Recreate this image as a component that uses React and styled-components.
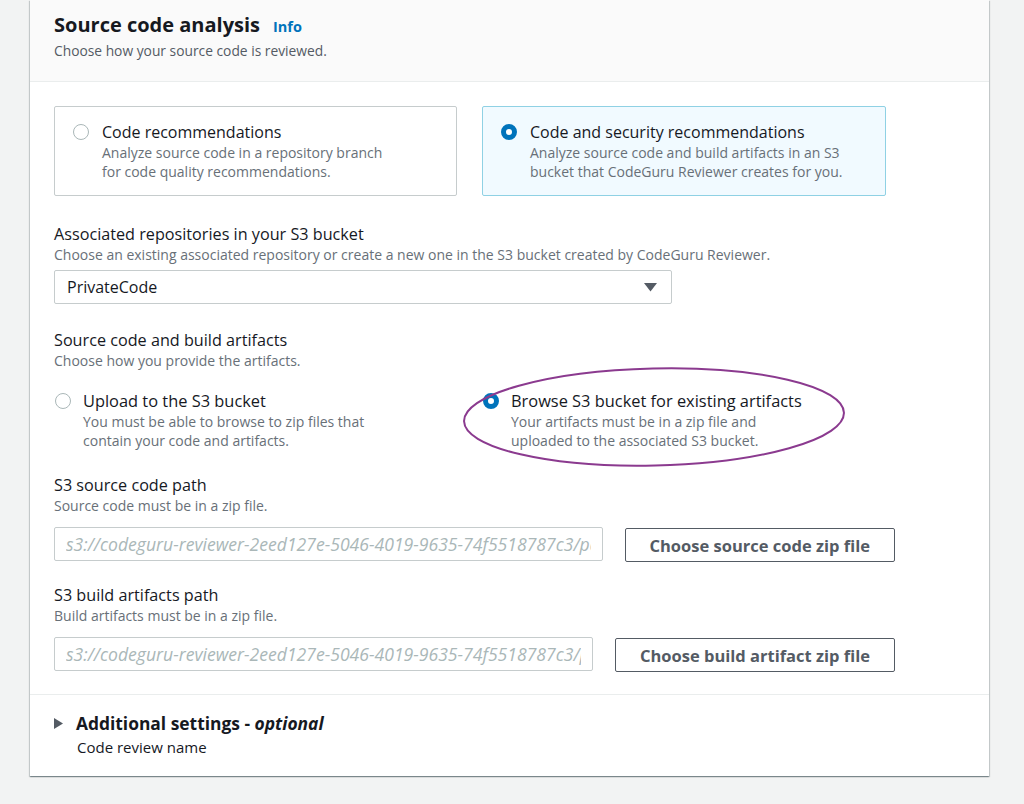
import React from 'react';
import styled, { createGlobalStyle } from 'styled-components';

const GlobalStyle = createGlobalStyle`
  body {
    margin: 0;
    background: #f2f3f3;
    font-family: "Open Sans", "Noto Sans", sans-serif;
    color: #16191f;
  }
`;

const Page = styled.div`
  padding: 0 35px 28px 30px;
`;

const Card = styled.section`
  width: 959px;
  background: #ffffff;
  box-shadow: 0 1px 1px 0 rgba(0, 28, 36, 0.3), 1px 1px 1px 0 rgba(0, 28, 36, 0.15),
    -1px 1px 1px 0 rgba(0, 28, 36, 0.15);
`;

const Header = styled.header`
  height: 82px;
  box-sizing: border-box;
  padding: 11px 24px 0;
  background: #fafafa;
  border-bottom: 1px solid #eaeded;
`;

const Title = styled.h2`
  margin: 0;
  display: flex;
  align-items: baseline;
  gap: 13px;
  font-size: 20px;
  line-height: 28px;
  font-weight: 700;
`;

const InfoLink = styled.a`
  font-size: 14.5px;
  font-weight: 700;
  color: #0073bb;
  text-decoration: none;
`;

const HeaderDesc = styled.p`
  margin: 1px 0 0;
  font-size: 13.8px;
  line-height: 18px;
  color: #545b64;
`;

const Body = styled.div`
  padding: 24px 24px 0;
`;

const TwoCols = styled.div`
  display: grid;
  grid-template-columns: 403px 404px;
  column-gap: 25px;
`;

const Tile = styled.div`
  position: relative;
  height: 90px;
  box-sizing: border-box;
  padding: 14px 18px;
  display: flex;
  gap: 13px;
  border: 1px solid ${(p) => (p.$selected ? '#8fd1e4' : '#c6cccd')};
  border-radius: 2px;
  background: ${(p) => (p.$selected ? '#f1faff' : '#ffffff')};
`;

const Radio = styled.span`
  flex: none;
  width: 16px;
  height: 16px;
  margin-top: 3px;
  box-sizing: border-box;
  border-radius: 50%;
  background: #ffffff;
  border: ${(p) => (p.$checked ? '5px solid #0073bb' : '1.5px solid #aab7b8')};
`;

const OptionText = styled.div`
  display: flex;
  flex-direction: column;
`;

const OptionLabel = styled.span`
  font-size: ${(p) => p.$size || 16}px;
  line-height: 22px;
  color: #16191f;
`;

const OptionDesc = styled.span`
  font-size: 14px;
  line-height: 19px;
  color: #687078;
`;

const Field = styled.div`
  margin-top: ${(p) => p.$top}px;
`;

const Label = styled.div`
  font-size: 16.2px;
  line-height: 20px;
  color: #16191f;
`;

const Desc = styled.div`
  margin-top: 2px;
  font-size: 14px;
  line-height: 18px;
  color: #687078;
`;

const Select = styled.div`
  margin-top: 6px;
  width: 618px;
  height: 34px;
  box-sizing: border-box;
  padding: 0 14px 0 12px;
  display: flex;
  align-items: center;
  justify-content: space-between;
  border: 1px solid #c6cccd;
  border-radius: 2px;
  font-size: 16px;
  color: #16191f;
`;

const RadioOption = styled.div`
  position: relative;
  display: flex;
  gap: 12px;
  padding-left: 1px;
`;

/* hand-drawn highlight ring laid over the selected option */
const Ellipse = styled.svg`
  position: absolute;
  left: -24px;
  top: -25px;
  width: 392px;
  height: 104px;
  overflow: visible;
  pointer-events: none;
`;

const PathRow = styled.div`
  margin-top: ${(p) => p.$top}px;
  width: 841px;
  display: flex;
  gap: 22px;
`;

const PathInput = styled.input`
  flex: 1;
  min-width: 0;
  height: 34px;
  box-sizing: border-box;
  padding: 0 11px;
  border: 1px solid #c6cccd;
  border-radius: 2px;
  font-family: "Open Sans", "Noto Sans", sans-serif;
  font-size: 17.6px;
  font-style: italic;
  color: #aab7b8;
  background: #ffffff;
  &::placeholder {
    color: #aab7b8;
  }
`;

const Button = styled.button`
  flex: none;
  height: 34px;
  margin-top: 1px;
  padding: 0 24px;
  border: 1px solid #545b64;
  border-radius: 2px;
  background: #ffffff;
  font-family: "Open Sans", "Noto Sans", sans-serif;
  font-size: 16.5px;
  font-weight: 700;
  color: #545b64;
`;

const Divider = styled.hr`
  margin: 22px 0 0;
  border: 0;
  border-top: 1px solid #eaeded;
`;

const Expand = styled.div`
  padding: 16px 24px 18px;
`;

const ExpandHead = styled.div`
  display: flex;
  align-items: center;
  gap: 13px;
  font-size: 17.4px;
  line-height: 24px;
  font-weight: 700;
  color: #16191f;
  em {
    font-weight: 700;
  }
`;

const ExpandSub = styled.div`
  margin-left: 23px;
  margin-top: 1px;
  font-size: 15px;
  line-height: 22px;
  color: #16191f;
`;

function Caret() {
  return (
    <svg width="13" height="9" viewBox="0 0 13 9">
      <path d="M0 0 H13 L6.5 8.5 Z" fill="#545b64" />
    </svg>
  );
}

function Expander() {
  return (
    <svg width="9" height="11" viewBox="0 0 9 11">
      <path d="M0 0 L9 5.5 L0 11 Z" fill="#545b64" />
    </svg>
  );
}

export default function App() {
  return (
    <>
      <GlobalStyle />
      <Page>
        <Card>
          <Header>
            <Title>
              Source code analysis <InfoLink href="#">Info</InfoLink>
            </Title>
            <HeaderDesc>Choose how your source code is reviewed.</HeaderDesc>
          </Header>

          <Body>
            <TwoCols>
              <Tile>
                <Radio />
                <OptionText>
                  <OptionLabel>Code recommendations</OptionLabel>
                  <OptionDesc>
                    Analyze source code in a repository branch
                    <br />
                    for code quality recommendations.
                  </OptionDesc>
                </OptionText>
              </Tile>
              <Tile $selected>
                <Radio $checked />
                <OptionText>
                  <OptionLabel>Code and security recommendations</OptionLabel>
                  <OptionDesc>
                    Analyze source code and build artifacts in an S3
                    <br />
                    bucket that CodeGuru Reviewer creates for you.
                  </OptionDesc>
                </OptionText>
              </Tile>
            </TwoCols>

            <Field $top={28}>
              <Label>Associated repositories in your S3 bucket</Label>
              <Desc>
                Choose an existing associated repository or create a new one in the S3 bucket created by
                CodeGuru Reviewer.
              </Desc>
              <Select>
                PrivateCode
                <Caret />
              </Select>
            </Field>

            <Field $top={26}>
              <Label>Source code and build artifacts</Label>
              <Desc>Choose how you provide the artifacts.</Desc>
            </Field>

            <Field $top={20}>
              <TwoCols>
                <RadioOption>
                  <Radio />
                  <OptionText>
                    <OptionLabel $size={16.4}>Upload to the S3 bucket</OptionLabel>
                    <OptionDesc>
                      You must be able to browse to zip files that
                      <br />
                      contain your code and artifacts.
                    </OptionDesc>
                  </OptionText>
                </RadioOption>
                <RadioOption>
                  <Radio $checked />
                  <OptionText>
                    <OptionLabel $size={16.4}>Browse S3 bucket for existing artifacts</OptionLabel>
                    <OptionDesc>
                      Your artifacts must be in a zip file and
                      <br />
                      uploaded to the associated S3 bucket.
                    </OptionDesc>
                  </OptionText>
                  <Ellipse viewBox="0 0 392 104">
                    <ellipse
                      cx="196"
                      cy="52"
                      rx="190"
                      ry="48.5"
                      transform="rotate(-1.3 196 52)"
                      fill="none"
                      stroke="#8b3a8f"
                      strokeWidth="2"
                    />
                  </Ellipse>
                </RadioOption>
              </TwoCols>
            </Field>

            <Field $top={25}>
              <Label>S3 source code path</Label>
              <Desc>Source code must be in a zip file.</Desc>
            </Field>
            <PathRow $top={12}>
              <PathInput placeholder="s3://codeguru-reviewer-2eed127e-5046-4019-9635-74f5518787c3/path/to/source.zip" readOnly />
              <Button>Choose source code zip file</Button>
            </PathRow>

            <Field $top={23}>
              <Label>S3 build artifacts path</Label>
              <Desc>Build artifacts must be in a zip file.</Desc>
            </Field>
            <PathRow $top={12}>
              <PathInput placeholder="s3://codeguru-reviewer-2eed127e-5046-4019-9635-74f5518787c3/path/to/build.zip" readOnly />
              <Button>Choose build artifact zip file</Button>
            </PathRow>
          </Body>

          <Divider />
          <Expand>
            <ExpandHead>
              <Expander />
              <span>
                Additional settings - <em>optional</em>
              </span>
            </ExpandHead>
            <ExpandSub>Code review name</ExpandSub>
          </Expand>
        </Card>
      </Page>
    </>
  );
}
